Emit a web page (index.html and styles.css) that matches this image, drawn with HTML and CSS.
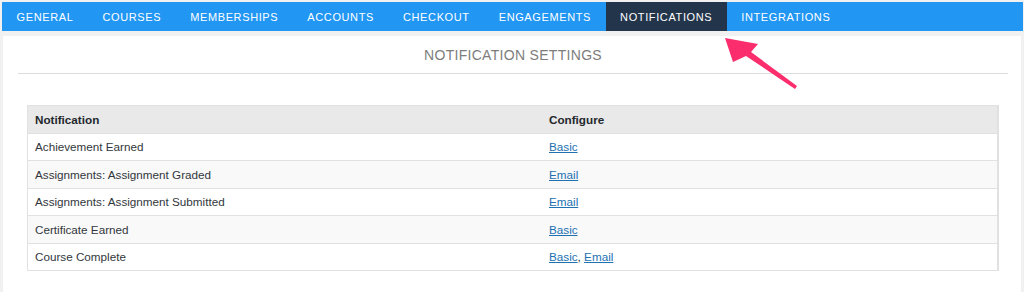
FILE: index.html
```html
<!DOCTYPE html>
<html lang="en">
<head>
    <meta charset="UTF-8">
    <title>Notification Settings</title>
    <link rel="stylesheet" href="styles.css">
</head>
<body>
    <!-- Settings tabs -->
    <nav class="tabs">
        <a href="#">General</a>
        <a href="#">Courses</a>
        <a href="#">Memberships</a>
        <a href="#">Accounts</a>
        <a href="#">Checkout</a>
        <a href="#">Engagements</a>
        <a href="#" class="active">Notifications</a>
        <a href="#">Integrations</a>
    </nav>

    <!-- Settings panel -->
    <div class="panel">
        <h2 class="panel-title">Notification Settings</h2>

        <table class="notify-table">
            <thead>
                <tr>
                    <th class="col-name">Notification</th>
                    <th>Configure</th>
                </tr>
            </thead>
            <tbody>
                <tr>
                    <td>Achievement Earned</td>
                    <td><a href="#">Basic</a></td>
                </tr>
                <tr>
                    <td>Assignments: Assignment Graded</td>
                    <td><a href="#">Email</a></td>
                </tr>
                <tr>
                    <td>Assignments: Assignment Submitted</td>
                    <td><a href="#">Email</a></td>
                </tr>
                <tr>
                    <td>Certificate Earned</td>
                    <td><a href="#">Basic</a></td>
                </tr>
                <tr>
                    <td>Course Complete</td>
                    <td><a href="#">Basic</a>, <a href="#">Email</a></td>
                </tr>
            </tbody>
        </table>
    </div>

    <!-- Annotation arrow pointing at the active tab -->
    <svg class="callout" width="1024" height="292" viewBox="0 0 1024 292">
        <polygon points="725,38 758,44 751,52 797,86 795,89 746,56 733,62" fill="#fb2d6c"/>
    </svg>
</body>
</html>
```

FILE: styles.css
```css
/* Page */
body {
    margin: 0;
    background-color: #f1f1f1;
    font-family: "Liberation Sans", Arial, sans-serif;
    color: #32373c;
}

/* Tabs bar */
.tabs {
    display: flex;
    margin: 2px 1px 0 2px;
    background-color: #2196f3;
    height: 29px;
}

.tabs a {
    display: block;
    padding: 1px 14.5px 0;
    line-height: 28px;
    font-size: 11px;
    letter-spacing: 0.62px;
    text-transform: uppercase;
    text-decoration: none;
    color: #ffffff;
}

.tabs a.active {
    background-color: #23354b;
}

/* Panel */
.panel {
    margin: 5px 3px 0 3px;
    background-color: #ffffff;
    padding: 10px 13px 21px 15px;
}

.panel-title {
    margin: 0;
    padding: 1px 0 9px;
    border-bottom: 1px solid #dcdcdc;
    text-align: center;
    font-size: 14px;
    font-weight: normal;
    letter-spacing: 0.3px;
    line-height: 17px;
    text-transform: uppercase;
    color: #7d7d7d;
}

/* Notification table */
.notify-table {
    width: 972px;
    margin: 31px 0 0 9px;
    border-collapse: collapse;
    border: 1px solid #e1e1e1;
    border-right-width: 2px;
    font-size: 11.7px;
}

.notify-table th,
.notify-table td {
    padding: 6.5px 7px;
    line-height: 13.5px;
    text-align: left;
    border-bottom: 1px solid #e1e1e1;
}

.notify-table th {
    background-color: #e9e9e9;
    font-weight: bold;
    color: #23282d;
}

.notify-table .col-name {
    width: 500px;
}

.notify-table tbody tr:nth-child(even) {
    background-color: #f9f9f9;
}

.notify-table a {
    color: #2271b1;
}

/* Annotation overlay */
.callout {
    position: absolute;
    top: 0;
    left: 0;
    pointer-events: none;
}
```
